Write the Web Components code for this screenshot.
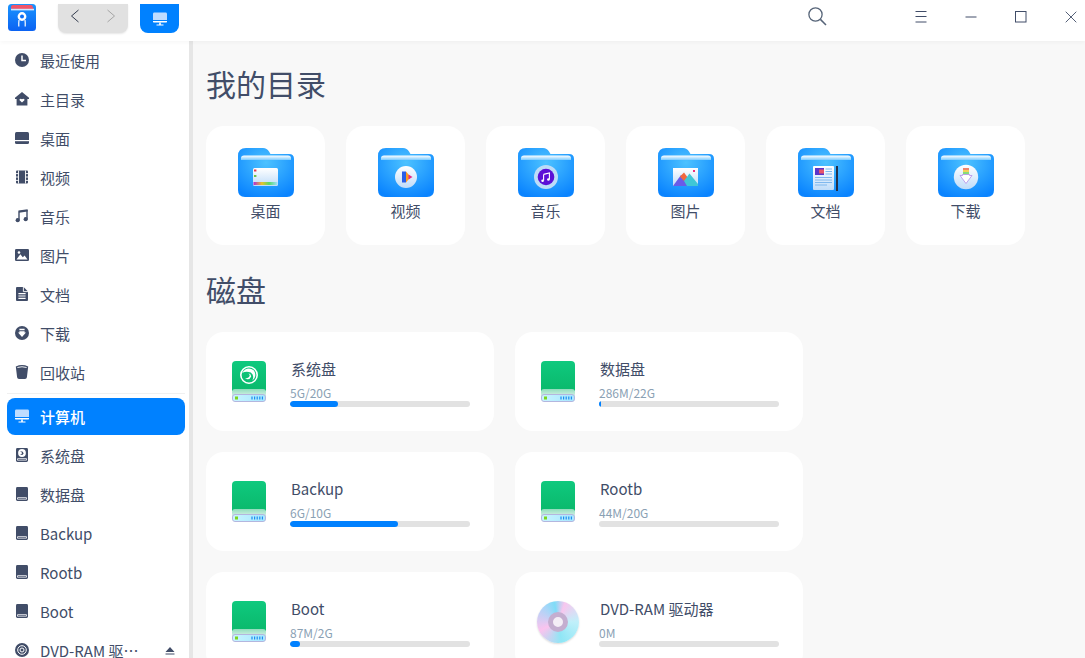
<!DOCTYPE html>
<html lang="zh-CN">
<head>
<meta charset="utf-8">
<title>文件管理器</title>
<style>
    html, body { margin: 0; height: 100%; overflow: hidden; background: #f8f8f8; }
    body { font-family: "Noto Sans CJK SC", "Noto Sans", sans-serif; color: #414d68; }
</style>
</head>
<body>
<file-manager>
    <app-titlebar slot="top"></app-titlebar>
    <side-bar slot="side">
        <side-item icon="clock">最近使用</side-item>
        <side-item icon="home">主目录</side-item>
        <side-item icon="desktop">桌面</side-item>
        <side-item icon="film">视频</side-item>
        <side-item icon="note">音乐</side-item>
        <side-item icon="image">图片</side-item>
        <side-item icon="doc">文档</side-item>
        <side-item icon="down">下载</side-item>
        <side-item icon="trash">回收站</side-item>
        <side-rule></side-rule>
        <side-item icon="monitor" active>计算机</side-item>
        <side-item icon="sysdisk">系统盘</side-item>
        <side-item icon="disk">数据盘</side-item>
        <side-item icon="disk">Backup</side-item>
        <side-item icon="disk">Rootb</side-item>
        <side-item icon="disk">Boot</side-item>
        <side-item icon="dvd" eject>DVD-RAM 驱…</side-item>
    </side-bar>
    <main-view slot="main">
        <section-title>我的目录</section-title>
        <dir-grid>
            <dir-card kind="desktop">桌面</dir-card>
            <dir-card kind="video">视频</dir-card>
            <dir-card kind="music">音乐</dir-card>
            <dir-card kind="picture">图片</dir-card>
            <dir-card kind="document">文档</dir-card>
            <dir-card kind="download">下载</dir-card>
        </dir-grid>
        <section-title>磁盘</section-title>
        <disk-grid>
            <disk-card name="系统盘" size="5G/20G" used="26.7" kind="system"></disk-card>
            <disk-card name="数据盘" size="286M/22G" used="1.3"></disk-card>
            <disk-card name="Backup" size="6G/10G" used="60"></disk-card>
            <disk-card name="Rootb" size="44M/20G" used="0"></disk-card>
            <disk-card name="Boot" size="87M/2G" used="5.6"></disk-card>
            <disk-card name="DVD-RAM 驱动器" size="0M" used="0" kind="dvd"></disk-card>
        </disk-grid>
    </main-view>
</file-manager>

<script>
const SIDE_ICONS = {
    clock: `<circle cx="8" cy="8" r="7"/><path d="M8 3.5V8.6H12" fill="none" stroke="#fff" stroke-width="1.5"/>`,
    home: `<path d="M8 1L15 6.8V8H13.4V14.5H2.6V8H1V6.8Z"/><path d="M8 11.6L5.6 9.3C5 8.2 6.6 6.9 8 8.2C9.4 6.9 11 8.2 10.4 9.3Z" fill="#fff"/>`,
    desktop: `<path d="M2.5 2H13.5Q15 2 15 3.5V12.5Q15 14 13.5 14H2.5Q1 14 1 12.5V3.5Q1 2 2.5 2Z"/><path d="M1 10.6H15" stroke="#fff" stroke-width="1.2"/>`,
    film: `<path d="M3 1.5H13Q14 1.5 14 2.5V13.5Q14 14.5 13 14.5H3Q2 14.5 2 13.5V2.5Q2 1.5 3 1.5Z"/><path d="M4.5 1.5V14.5M11.5 1.5V14.5M2 4.6H4.5M2 8H4.5M2 11.4H4.5M11.5 4.6H14M11.5 8H14M11.5 11.4H14" stroke="#fff" stroke-width=".9"/>`,
    note: `<path d="M5 3.2V12M13 2V11" fill="none" stroke="#414d68" stroke-width="1.4"/><path d="M4.4 2.6L13.6 1.3V3.6L5 4.8Z"/><circle cx="3.7" cy="12.2" r="2.1"/><circle cx="11.7" cy="11.2" r="2.1"/>`,
    image: `<path d="M2.3 2H13.7Q15 2 15 3.3V12.7Q15 14 13.7 14H2.3Q1 14 1 12.7V3.3Q1 2 2.3 2Z"/><path d="M2.5 12.5L6.3 7.2L8.8 10.2L10.6 8.6L13.5 12.5Z" fill="#fff"/><circle cx="5" cy="5.5" r="1.3" fill="#fff"/>`,
    doc: `<path d="M3 1H9.6L14 5.4V14Q14 15 13 15H3Q2 15 2 14V2Q2 1 3 1Z"/><path d="M9.4 1V5.6H14" fill="none" stroke="#fff" stroke-width=".9"/><path d="M4.4 7.6H11.6M4.4 10H11.6M4.4 12.4H11.6" stroke="#fff" stroke-width="1.1"/>`,
    down: `<circle cx="8" cy="8" r="7"/><path d="M5.4 3.8H10.6V5.2H5.4ZM5.4 6.2H10.6V7.6H12L8 12L4 7.6H5.4Z" fill="#fff"/>`,
    trash: `<path d="M1.8 2.4Q8-.2 14.2 2.4L12.9 13.2Q12.7 15 11 15H5Q3.3 15 3.1 13.2Z"/><path d="M3.4 3.5Q8 2 12.6 3.5" fill="none" stroke="#fff" stroke-width=".9"/>`,
    monitor: `<path d="M2.4 1.6H13.6Q15 1.6 15 3V9H1V3Q1 1.6 2.4 1.6Z" fill="#bedcff"/><path d="M1 10H15V10.4Q15 11.6 13.6 11.6H2.4Q1 11.6 1 10.4Z" fill="#fff"/><path d="M4.5 13.6H11.5V14.5H4.5ZM7.2 11.6H8.8V13.6H7.2Z" fill="#fff"/>`,
    disk: `<path d="M3.4 1H12.6Q14 1 14 2.4V13.6Q14 15 12.6 15H3.4Q2 15 2 13.6V2.4Q2 1 3.4 1Z"/><path d="M3.8 11.2H12.2Q12.8 11.2 12.8 11.8V13Q12.8 13.6 12.2 13.6H3.8Q3.2 13.6 3.2 13V11.8Q3.2 11.2 3.8 11.2Z" fill="#fff"/><path d="M4 12.4H12" stroke="#414d68" stroke-width=".8"/>`,
    sysdisk: `<path d="M3.4 1H12.6Q14 1 14 2.4V13.6Q14 15 12.6 15H3.4Q2 15 2 13.6V2.4Q2 1 3.4 1Z"/><circle cx="8" cy="6" r="3.9" fill="#fff"/><path d="M6 4.2Q9.4 3.8 9.6 6.4Q8.6 8.8 5.8 7.6Q8 7.6 8 6Q7.6 4.8 6 4.2Z"/><path d="M3.8 11.2H12.2Q12.8 11.2 12.8 11.8V13Q12.8 13.6 12.2 13.6H3.8Q3.2 13.6 3.2 13V11.8Q3.2 11.2 3.8 11.2Z" fill="#fff"/><path d="M4 12.4H12" stroke="#414d68" stroke-width=".8"/>`,
    dvd: `<circle cx="8" cy="8" r="7"/><circle cx="8" cy="8" r="4.3" fill="none" stroke="#fff" stroke-width="1"/><circle cx="8" cy="8" r="2" fill="none" stroke="#fff" stroke-width="1"/>`,
};

const FOLDER_MARKS = {
    desktop: `<rect x="15" y="20" width="25" height="18" rx="1.5" fill="url(#paper)"/><rect x="15.5" y="34" width="24" height="3" fill="url(#rainbow)"/><rect x="16" y="21.5" width="2.4" height="2" fill="#e8384f"/><rect x="16" y="27" width="2.4" height="2" fill="#6cc24a"/>`,
    video: `<circle cx="28" cy="29" r="11" fill="url(#paper)"/><path d="M24 23.5H28V34.5H24Z" fill="#2a5fe8"/><path d="M28 23.5L32.5 29L28 34.5Z" fill="#ff9a1f"/><path d="M30.5 26.5L34.5 29L30.5 31.5Z" fill="#e52a8c"/>`,
    music: `<circle cx="28" cy="29" r="12" fill="#bcdcf8"/><circle cx="28" cy="29" r="8.3" fill="#5b0fd6"/><path d="M25.6 26.4L31.4 25V31.4M25.6 26.4V32.6" fill="none" stroke="#fff" stroke-width="1.1"/><circle cx="24.6" cy="32.7" r="1.3" fill="#fff"/><circle cx="30.4" cy="31.5" r="1.3" fill="#fff"/>`,
    picture: `<rect x="15" y="20" width="25" height="18" fill="url(#paper)"/><path d="M15 38L23 27L28 31L32 38Z" fill="#6a5be8"/><path d="M22 28.5L26 24.5L30 30L26 33Z" fill="#f0683e"/><path d="M26 33L31.5 25.5L40 36V38H29Z" fill="#3fc7d6"/><rect x="35" y="22" width="2" height="2" fill="#ef2f7e"/>`,
    document: `<rect x="15" y="18" width="21" height="24" rx="1" fill="url(#paper)"/><rect x="17" y="20" width="9" height="7" fill="#5b35c9"/><rect x="21" y="21.5" width="5" height="4" fill="#e8556a"/><path d="M27.5 21H34M27.5 23.5H34M27.5 26H34M17 29.5H34M17 32H34M17 34.5H34M17 37H29" stroke="#7fb8ee" stroke-width="1"/><rect x="38" y="18" width="2" height="25" fill="#22304a"/>`,
    download: `<circle cx="28" cy="29" r="12.2" fill="url(#paper)"/><rect x="25" y="20" width="6" height="2" fill="#f0856a"/><rect x="25" y="22" width="6" height="2" fill="#f3d25a"/><rect x="25" y="24" width="6" height="2.5" fill="#86dc7a"/><path d="M24.5 26.5H31.5V27.5H34L28 35.5L22 27.5H24.5Z" fill="#fff" stroke="#b18de8" stroke-width=".8"/>`,
};

class FileManager extends HTMLElement {
    constructor() {
        super();
        this.attachShadow({ mode: "open" });
        this.shadowRoot.innerHTML = `
            <style>
                :host { display: grid; grid-template: 41px 617px / 193px 892px; width: 1085px; height: 658px; overflow: hidden; }
                ::slotted([slot="top"]) { grid-column: 1 / 3; }
            </style>
            <slot name="top"></slot>
            <slot name="side"></slot>
            <slot name="main"></slot>
        `;
    }
}

class AppTitlebar extends HTMLElement {
    constructor() {
        super();
        this.attachShadow({ mode: "open" });
        this.shadowRoot.innerHTML = `
            <style>
                :host { display: flex; align-items: flex-start; height: 41px; background: #fff; position: relative; z-index: 2; box-shadow: 0 2px 4px rgba(0, 0, 0, .03); }
                .logo { margin: 4px 0 0 8px; width: 28px; height: 27px; }
                .nav { display: flex; margin: 4px 0 0 22px; width: 70px; height: 29px; background: #e1e1e1; border-radius: 0 0 8px 8px; box-shadow: 0 1px 2px rgba(0, 0, 0, .1); }
                .nav span { flex: 1; display: flex; align-items: center; justify-content: center; height: 24px; }
                .nav span:first-child { padding-right: 2px; }
                .view { display: flex; align-items: center; justify-content: center; margin: 4px 0 0 12px; width: 39px; height: 29px; background: #0081ff; border-radius: 0 0 8px 8px; }
                .search { margin: 5px 0 0 auto; width: 22px; height: 22px; }
                .win { display: flex; margin: 0 -11px 0 68px; }
                .win span { display: flex; align-items: center; justify-content: center; width: 50px; height: 33px; }
                svg { display: block; }
            </style>
            <svg class="logo" viewBox="0 0 28 27">
                <defs>
                    <linearGradient id="lg" x1="0" y1="0" x2="0" y2="1"><stop offset="0" stop-color="#1a95ff"/><stop offset="1" stop-color="#0b62f2"/></linearGradient>
                </defs>
                <rect width="28" height="27" rx="3.5" fill="url(#lg)"/>
                <path d="M3 3.2Q3 1 5 1H23Q24.6 1 25 3.4L26 5.5L3 4.8Z" fill="#f0566b"/>
                <path d="M3 4.8H26V6.4H3Z" fill="#cfe6ff"/>
                <circle cx="14" cy="12.5" r="3.2" fill="#0f6ff5" stroke="#fff" stroke-width="2.4"/>
                <path d="M11 16Q10.6 19 10.8 22.5M17 16Q17.4 19 17.2 22.5" fill="none" stroke="#fff" stroke-width="1.2"/>
            </svg>
            <div class="nav">
                <span><svg width="12" height="14" viewBox="0 0 12 14"><path d="M9.5 1L2.5 7L9.5 13" fill="none" stroke="#333c4e" stroke-width="1"/></svg></span>
                <span><svg width="12" height="14" viewBox="0 0 12 14"><path d="M2.5 1L9.5 7L2.5 13" fill="none" stroke="#a5a5a5" stroke-width="1"/></svg></span>
            </div>
            <div class="view"><svg width="16" height="16" viewBox="0 0 16 16">${SIDE_ICONS.monitor}</svg></div>
            <svg class="search" viewBox="0 0 22 22"><circle cx="9.5" cy="9.5" r="6.6" fill="none" stroke="#566478" stroke-width="1.3"/><path d="M14.4 14.4L20 20" stroke="#566478" stroke-width="1.5"/></svg>
            <div class="win">
                <span><svg width="12" height="12" viewBox="0 0 12 12"><path d="M.5 .5H11.5M.5 5.5H11.5M.5 11H11.5" stroke="#414d68" stroke-width="1"/></svg></span>
                <span><svg width="12" height="12" viewBox="0 0 12 12"><path d="M.5 6H11.5" stroke="#414d68" stroke-width="1"/></svg></span>
                <span><svg width="12" height="12" viewBox="0 0 12 12"><rect x=".5" y=".5" width="10.5" height="10.5" fill="none" stroke="#414d68" stroke-width="1"/></svg></span>
                <span><svg width="12" height="12" viewBox="0 0 12 12"><path d="M.7 .7L11.3 11.3M11.3 .7L.7 11.3" stroke="#414d68" stroke-width=".9"/></svg></span>
            </div>
        `;
    }
}

class SideBar extends HTMLElement {
    constructor() {
        super();
        this.attachShadow({ mode: "open" });
        this.shadowRoot.innerHTML = `
            <style>
                :host { display: block; box-sizing: border-box; height: 617px; background: #fff; border-right: 4px solid #e6e6e6; overflow: hidden; }
            </style>
            <slot></slot>
        `;
    }
}

class SideRule extends HTMLElement {
    constructor() {
        super();
        this.attachShadow({ mode: "open" });
        this.shadowRoot.innerHTML = `
            <style>
                :host { display: block; height: 1px; margin: 1px 4px 3px 7px; background: #f0f0f0; }
            </style>
        `;
    }
}

class SideItem extends HTMLElement {
    constructor() {
        super();
        this.attachShadow({ mode: "open" });
    }

    connectedCallback() {
        const active = this.hasAttribute("active");
        const eject = this.hasAttribute("eject")
            ? `<svg class="eject" width="10" height="8" viewBox="0 0 10 8"><path d="M5 0L9.5 5H.5Z M.5 6.4H9.5V7.6H.5Z" fill="#414d68"/></svg>`
            : "";
        this.shadowRoot.innerHTML = `
            <style>
                :host { display: block; box-sizing: border-box; height: 39px; padding-top: 1px; margin: 0 4px 0 7px; font-size: 15px; color: #414d68; }
                .row { display: flex; align-items: center; gap: 10px; box-sizing: border-box; height: 37px; padding-left: 7px; border-radius: 8px; white-space: nowrap; }
                .row.on { background: #0081ff; color: #fff; font-weight: 500; }
                .ico { flex: none; fill: #414d68; position: relative; top: -1px; }
                .eject { margin-left: auto; margin-right: 10px; flex: none; }
            </style>
            <div class="row ${active ? "on" : ""}">
                <svg class="ico" width="16" height="16" viewBox="0 0 16 16">${SIDE_ICONS[this.getAttribute("icon")]}</svg>
                <span><slot></slot></span>
                ${eject}
            </div>
        `;
    }
}

class MainView extends HTMLElement {
    constructor() {
        super();
        this.attachShadow({ mode: "open" });
        this.shadowRoot.innerHTML = `
            <style>
                :host { display: block; box-sizing: border-box; height: 617px; padding: 20px 0 0 13px; background: #f8f8f8; overflow: hidden; }
            </style>
            <slot></slot>
        `;
    }
}

class SectionTitle extends HTMLElement {
    constructor() {
        super();
        this.attachShadow({ mode: "open" });
        this.shadowRoot.innerHTML = `
            <style>
                :host { display: block; height: 44px; line-height: 44px; font-size: 30px; color: #414d68; }
            </style>
            <slot></slot>
        `;
    }
}

class DirGrid extends HTMLElement {
    constructor() {
        super();
        this.attachShadow({ mode: "open" });
        this.shadowRoot.innerHTML = `
            <style>
                :host { display: flex; gap: 21px; margin: 21px 0 22px; }
            </style>
            <slot></slot>
        `;
    }
}

class DirCard extends HTMLElement {
    constructor() {
        super();
        this.attachShadow({ mode: "open" });
    }

    connectedCallback() {
        this.shadowRoot.innerHTML = `
            <style>
                :host { display: flex; flex-direction: column; align-items: center; box-sizing: border-box; width: 119px; height: 119px; padding-top: 22px; background: #fff; border-radius: 18px; font-size: 15px; color: #414d68; }
                svg { display: block; }
                .label { margin-top: 3px; line-height: 22px; }
            </style>
            <svg width="56" height="49" viewBox="0 0 56 49">
                <defs>
                    <radialGradient id="folder" cx=".5" cy=".3" r=".75"><stop offset="0" stop-color="#4cc2ff"/><stop offset="1" stop-color="#0a84ff"/></radialGradient>
                    <linearGradient id="paper" x1="0" y1="0" x2="0" y2="1"><stop offset="0" stop-color="#fff"/><stop offset="1" stop-color="#bfdcf9"/></linearGradient>
                    <linearGradient id="strip" x1="0" y1="0" x2="0" y2="1"><stop offset="0" stop-color="#fff"/><stop offset="1" stop-color="#7ccbff"/></linearGradient>
                    <linearGradient id="rainbow"><stop offset="0" stop-color="#b02ad8"/><stop offset=".35" stop-color="#e8c52a"/><stop offset=".65" stop-color="#58d86a"/><stop offset="1" stop-color="#9fe0ff"/></linearGradient>
                </defs>
                <path d="M0 8Q0 0 8 0H25Q29 0 31 3.5L32.5 6H51Q56 6 56 11V42Q56 49 49 49H7Q0 49 0 42Z" fill="url(#folder)"/>
                <path d="M3 12V10Q3 7.5 6 7.5H50Q53 7.5 53 10V12Z" fill="url(#strip)"/>
                ${FOLDER_MARKS[this.getAttribute("kind")]}
            </svg>
            <div class="label"><slot></slot></div>
        `;
    }
}

class DiskGrid extends HTMLElement {
    constructor() {
        super();
        this.attachShadow({ mode: "open" });
        this.shadowRoot.innerHTML = `
            <style>
                :host { display: grid; grid-template-columns: 288px 288px; gap: 21px; margin-top: 21px; }
            </style>
            <slot></slot>
        `;
    }
}

class DiskCard extends HTMLElement {
    constructor() {
        super();
        this.attachShadow({ mode: "open" });
    }

    icon(kind) {
        if (kind === "dvd") {
            return `<div class="dvd"><i></i></div>`;
        }
        const swirl = kind === "system"
            ? `<circle cx="17" cy="14" r="8.2" fill="none" stroke="#fff" stroke-width="1.6"/><path d="M10 12Q15 4.6 22 9.4Q25.4 15.4 20.4 19.4Q22.6 14 18.8 11.4Q14 9.6 10 12Z" fill="#fff"/><path d="M13 17.6Q17.6 19.4 19.2 15.4Q19 12.6 16.4 12.2Q19 14.6 16.4 16.4Q14.6 17.4 13 17.6Z" fill="#fff"/>`
            : "";
        return `
            <svg width="34" height="41" viewBox="0 0 34 41">
                <defs>
                    <linearGradient id="body" x1="0" y1="0" x2="0" y2="1"><stop offset="0" stop-color="#0fc97e"/><stop offset="1" stop-color="#0ab96c"/></linearGradient>
                    <linearGradient id="lip" x1="0" y1="0" x2="0" y2="1"><stop offset="0" stop-color="#8fdcbc"/><stop offset="1" stop-color="#f4fbf8"/></linearGradient>
                    <linearGradient id="tray"><stop offset="0" stop-color="#c9f4ff"/><stop offset="1" stop-color="#a6e6ff"/></linearGradient>
                </defs>
                <path d="M4 0H30Q34 0 34 4V30H0V4Q0 0 4 0Z" fill="url(#body)"/>
                <path d="M0 31Q0 28 3 28H31Q34 28 34 31V38H0Z" fill="url(#lip)"/>
                <rect x=".5" y="33.5" width="33" height="7" rx="2.5" fill="url(#tray)" stroke="#b4b6de"/>
                <rect x="3" y="35.5" width="3" height="3" fill="#7bd61e"/>
                <path d="M20 35.5V38.5M22.6 35.5V38.5M25.2 35.5V38.5M27.8 35.5V38.5M30.4 35.5V38.5" stroke="#1c90f0" stroke-width="1.2"/>
                ${swirl}
            </svg>
        `;
    }

    connectedCallback() {
        const kind = this.getAttribute("kind");
        const used = this.getAttribute("used");
        this.shadowRoot.innerHTML = `
            <style>
                :host { display: flex; box-sizing: border-box; width: 288px; height: 99px; background: #fff; border-radius: 18px; color: #414d68; }
                .pic { flex: none; display: flex; justify-content: center; align-items: center; box-sizing: border-box; width: 84px; height: 99px; padding-left: 2px; }
                .info { width: 180px; padding-top: 26px; }
                .name { font-size: 15px; line-height: 22px; padding-left: 1px; }
                .size { font-size: 12px; line-height: 16px; margin-top: 5px; color: #8aa1b4; }
                .bar { height: 6px; background: #e2e2e2; border-radius: 3px; overflow: hidden; }
                .bar b { display: block; height: 100%; background: #0081ff; border-radius: 3px; }
                svg { display: block; }
                .dvd { display: flex; align-items: center; justify-content: center; width: 42px; height: 42px; border-radius: 50%; box-shadow: 0 1px 2px rgba(0, 0, 0, .15); background: conic-gradient(from 20deg, #f8c6ee, #c0f0fa 70deg, #8fe6f5 150deg, #fbc3ee 225deg, #a8d6f8 300deg, #7fdcf7 330deg, #f8c6ee); }
                .dvd i { display: block; box-sizing: border-box; width: 20px; height: 20px; border-radius: 50%; background: #f4eef6; border: 5px solid #c4aed0; }
            </style>
            <div class="pic">${this.icon(kind)}</div>
            <div class="info">
                <div class="name">${this.getAttribute("name")}</div>
                <div class="size">${this.getAttribute("size")}</div>
                <div class="bar"><b style="width:${used}%"></b></div>
            </div>
        `;
    }
}

customElements.define("file-manager", FileManager);
customElements.define("app-titlebar", AppTitlebar);
customElements.define("side-bar", SideBar);
customElements.define("side-rule", SideRule);
customElements.define("side-item", SideItem);
customElements.define("main-view", MainView);
customElements.define("section-title", SectionTitle);
customElements.define("dir-grid", DirGrid);
customElements.define("dir-card", DirCard);
customElements.define("disk-grid", DiskGrid);
customElements.define("disk-card", DiskCard);
</script>
</body>
</html>
